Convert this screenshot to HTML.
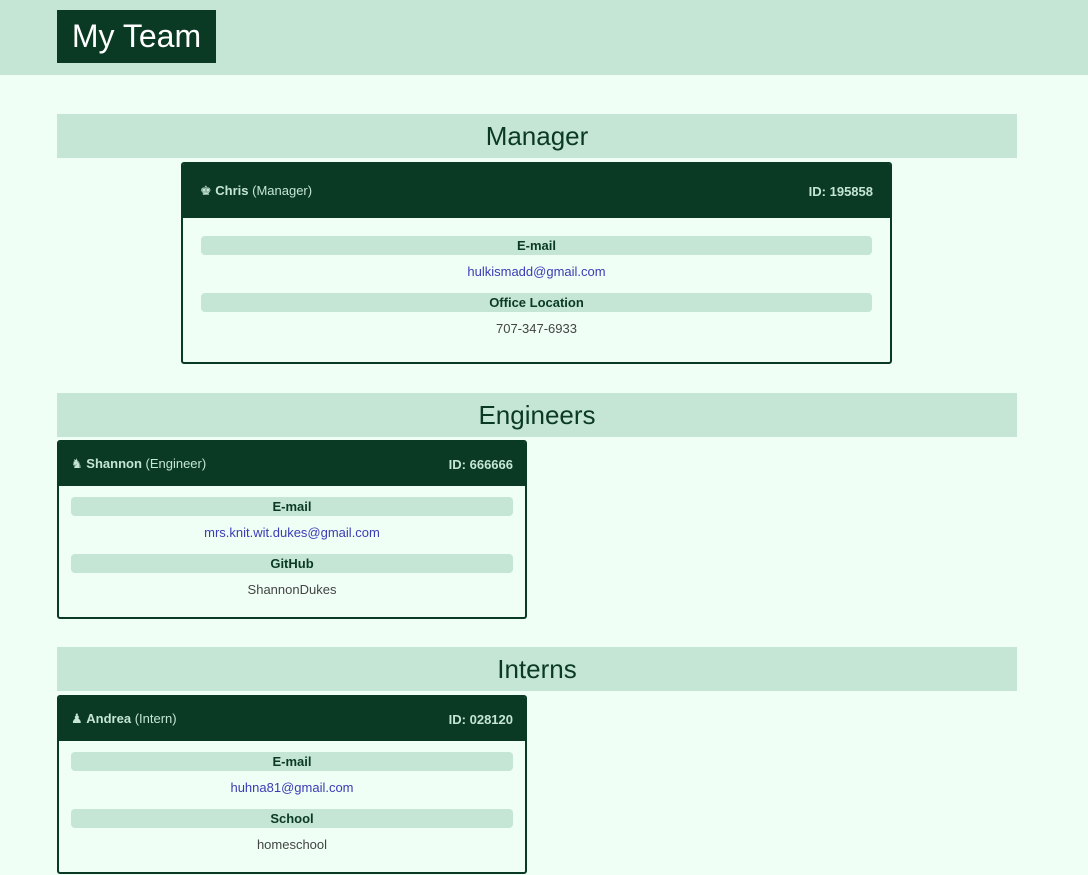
<!DOCTYPE html>
<html><head><style>
*{margin:0;padding:0;box-sizing:border-box}
body{width:1088px;height:875px;overflow:hidden;background:#effff6;font-family:"Liberation Sans",sans-serif;color:#0a3a23;position:relative}
.top{position:absolute;left:0;top:0;width:1088px;height:75px;background:#c5e5d5}
.title{position:absolute;left:57px;top:10px;width:159px;height:53px;background:#0a3a23;color:#fff;font-size:32px;line-height:53px;text-align:center}
.bar{position:absolute;left:57px;width:960px;height:44px;background:#c5e5d5;font-size:26px;line-height:44px;text-align:center;color:#0a3a23}
.card{position:absolute;border:2px solid #0a3a23;border-radius:3px;background:#effff6;overflow:hidden}
.ch{background:#0a3a23;color:#c5e5d5;font-size:13px;display:flex;justify-content:space-between;align-items:center;padding:0 17px}
.ch b{color:#c5e5d5}
.lb{position:absolute;height:19px;background:#c5e5d5;border-radius:4px;font-size:13px;font-weight:bold;text-align:center;line-height:19px;color:#0a3a23}
.v{position:absolute;font-size:13px;text-align:center;color:#444}
.v.m{color:#3b3bb5}
</style></head><body>
<div class="top"></div>
<div class="title">My Team</div>

<div class="bar" style="top:114px">Manager</div>
<div class="card" style="left:181px;top:162px;width:711px;height:202px">
<div class="ch" style="height:54px"><span>♚ <b>Chris</b> (Manager)</span><b>ID: 195858</b></div>
<div class="lb" style="left:18px;top:72px;width:671px">E-mail</div>
<div class="v m" style="left:18px;top:100px;width:671px">hulkismadd@gmail.com</div>
<div class="lb" style="left:18px;top:129px;width:671px">Office Location</div>
<div class="v" style="left:18px;top:157px;width:671px">707-347-6933</div>
</div>

<div class="bar" style="top:393px">Engineers</div>
<div class="card" style="left:57px;top:440px;width:470px;height:179px">
<div class="ch" style="height:44px;padding:0 12px"><span>♞ <b>Shannon</b> (Engineer)</span><b>ID: 666666</b></div>
<div class="lb" style="left:12px;top:55px;width:442px">E-mail</div>
<div class="v m" style="left:12px;top:83px;width:442px">mrs.knit.wit.dukes@gmail.com</div>
<div class="lb" style="left:12px;top:112px;width:442px">GitHub</div>
<div class="v" style="left:12px;top:140px;width:442px">ShannonDukes</div>
</div>

<div class="bar" style="top:647px">Interns</div>
<div class="card" style="left:57px;top:695px;width:470px;height:179px">
<div class="ch" style="height:44px;padding:0 12px"><span>♟ <b>Andrea</b> (Intern)</span><b>ID: 028120</b></div>
<div class="lb" style="left:12px;top:55px;width:442px">E-mail</div>
<div class="v m" style="left:12px;top:83px;width:442px">huhna81@gmail.com</div>
<div class="lb" style="left:12px;top:112px;width:442px">School</div>
<div class="v" style="left:12px;top:140px;width:442px">homeschool</div>
</div>
</body></html>
